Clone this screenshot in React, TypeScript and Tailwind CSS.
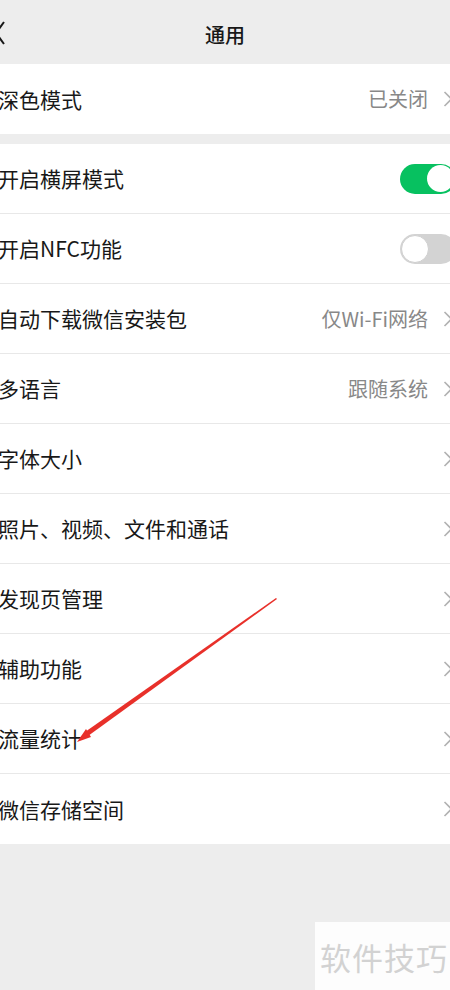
import React from "react";

const font = { fontFamily: '"Noto Sans CJK SC", "Noto Sans", sans-serif' };

function Chevron() {
  return (
    <svg width="10" height="20" viewBox="0 0 10 20" className="shrink-0">
      <path d="M1.5 3 L8.5 10 L1.5 17" fill="none" stroke="#b2b2b2" strokeWidth="1.6" />
    </svg>
  );
}

function Toggle({ on }: { on: boolean }) {
  if (on) {
    return (
      <div className="w-[56px] h-[30px] rounded-full bg-[#07c160] flex items-center justify-end pr-[2px] shrink-0">
        <div className="w-[27px] h-[27px] rounded-full bg-white" />
      </div>
    );
  }
  return (
    <div className="w-[56px] h-[30px] rounded-full bg-[#d3d3d3] flex items-center pl-[1px] shrink-0">
      <div className="w-[28px] h-[28px] rounded-full bg-white border border-[#cfcfcf]" />
    </div>
  );
}

type Row = { label: string; value?: string; toggle?: boolean; on?: boolean };

function RowItem({ r, last }: { r: Row; last: boolean }) {
  return (
    <div className={`h-[70px] flex items-center ${last ? "" : "border-b border-[#e8e8e8]"}`}>
      <div className="ml-[-2px] text-[21px] text-[#181818] flex-1 whitespace-nowrap leading-none">{r.label}</div>
      {r.toggle ? (
        <div className="mr-[-6px]">
          <Toggle on={!!r.on} />
        </div>
      ) : (
        <div className="flex items-center mr-[-3px]">
          {r.value && <span className="text-[20px] text-[#888888] mr-[15px] leading-none">{r.value}</span>}
          <Chevron />
        </div>
      )}
    </div>
  );
}

export default function App() {
  const rows: Row[] = [
    { label: "开启横屏模式", toggle: true, on: true },
    { label: "开启NFC功能", toggle: true, on: false },
    { label: "自动下载微信安装包", value: "仅Wi-Fi网络" },
    { label: "多语言", value: "跟随系统" },
    { label: "字体大小" },
    { label: "照片、视频、文件和通话" },
    { label: "发现页管理" },
    { label: "辅助功能" },
    { label: "流量统计" },
    { label: "微信存储空间" },
  ];
  return (
    <div className="relative w-[450px] h-[990px] bg-[#ededed] overflow-hidden" style={font}>
      <div className="h-[64px] flex items-center relative">
        <svg width="12" height="26" viewBox="0 0 12 26" className="absolute left-[-6px] top-[21px]">
          <path d="M10 1 L2 12 L10 23" fill="none" stroke="#181818" strokeWidth="2" />
        </svg>
        <div className="flex-1 text-center text-[20px] font-medium text-[#181818] mt-[6px]">通用</div>
      </div>
      <div className="bg-white">
        <RowItem r={{ label: "深色模式", value: "已关闭" }} last />
      </div>
      <div className="h-[10px]" />
      <div className="bg-white">
        {rows.map((r, i) => (
          <RowItem key={r.label} r={r} last={i === rows.length - 1} />
        ))}
      </div>

      <svg className="absolute left-0 top-0 pointer-events-none" width="450" height="990" viewBox="0 0 450 990">
        <polygon points="276,598 277,599 88,736 85,732" fill="#e8302a" />
        <polygon points="77,742 86,729 91,737" fill="#e8302a" />
      </svg>

      <div className="absolute left-[315px] top-[922px] w-[135px] h-[68px] bg-[#fdfdfd] flex items-center pl-[5px]">
        <span className="text-[31px] text-[#d2d2d2] whitespace-nowrap leading-none tracking-[1px]">软件技巧</span>
      </div>
    </div>
  );
}
